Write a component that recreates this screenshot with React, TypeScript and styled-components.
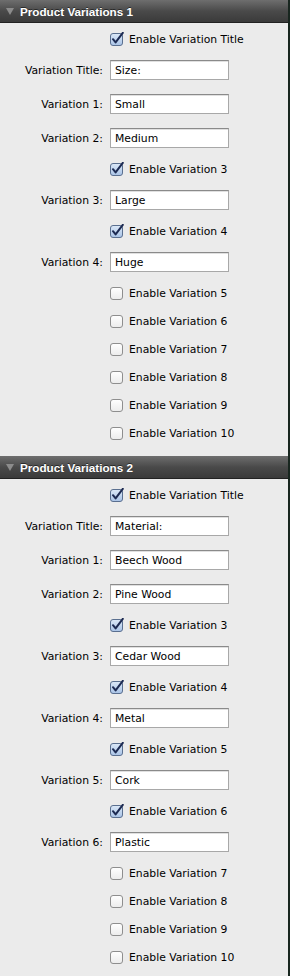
import React from "react";
import styled, { createGlobalStyle } from "styled-components";

const Global = createGlobalStyle`
  html, body { margin: 0; padding: 0; background: #ebebeb; }
  body { font-family: "DejaVu Sans", "Liberation Sans", sans-serif; }
`;

const Page = styled.div`
  width: 290px;
  box-sizing: border-box;
  border-right: 2px solid #18261f;
  background: #ebebeb;
`;

const Header = styled.div`
  height: 23px;
  box-sizing: border-box;
  display: flex;
  align-items: center;
  gap: 6px;
  padding-left: 6px;
  background: linear-gradient(#6e6e6e, #4a4a4a 50%, #3a3a3a);
  border-bottom: 1px solid #222;
  color: #fff;
  font-family: "Liberation Sans", Arial, sans-serif;
  font-weight: bold;
  font-size: 11.7px;
  text-shadow: 0 -1px 0 rgba(0,0,0,0.5);
`;

const Tri = styled.span`
  width: 0;
  height: 0;
  border-left: 4px solid transparent;
  border-right: 4px solid transparent;
  border-top: 7px solid #8c8c8c;
  margin-top: 1px;
`;

const Body = styled.div<{ $last?: boolean }>`
  padding: 2px 0 ${(p) => (p.$last ? "6px" : "9px")} 0;
  display: flex;
  flex-direction: column;
`;

const CheckRow = styled.div`
  height: 28px;
  display: flex;
  align-items: center;
  padding-left: 110px;
  gap: 5px;
  font-size: 10.8px;
  color: #000;
`;

const InputRow = styled.div`
  height: 34px;
  display: grid;
  grid-template-columns: 103px 119px;
  column-gap: 7px;
  align-items: center;
  font-size: 10.8px;
  color: #000;
`;

const Label = styled.label`
  text-align: right;
`;

const Field = styled.div`
  height: 20px;
  box-sizing: border-box;
  background: #fff;
  border: 1px solid #a8a8a8;
  border-top-color: #8a8a8a;
  box-shadow: inset 0 1px 0 #e0e0e0;
  display: flex;
  align-items: center;
  padding-left: 4px;
  font-size: 10.8px;
`;

const Box = ({ checked }: { checked: boolean }) => (
  <svg width="14" height="14" viewBox="0 0 14 14">
    <defs>
      <linearGradient id={checked ? "gc" : "gu"} x1="0" y1="0" x2="0" y2="1">
        {checked ? (
          <>
            <stop offset="0" stopColor="#dbe8f7" />
            <stop offset="1" stopColor="#a9c3e6" />
          </>
        ) : (
          <>
            <stop offset="0" stopColor="#ffffff" />
            <stop offset="1" stopColor="#ececec" />
          </>
        )}
      </linearGradient>
    </defs>
    <rect x="0.5" y="1.5" width="12" height="12" rx="2.5" fill={`url(#${checked ? "gc" : "gu"})`} stroke={checked ? "#5a6f8f" : "#8e8e8e"} />
    {checked && (
      <path d="M3 7.2 L5.6 10.4 L12.8 0.8" fill="none" stroke="#1c2a52" strokeWidth="2" strokeLinecap="round" strokeLinejoin="round" />
    )}
  </svg>
);

type Row =
  | { kind: "check"; label: string; checked: boolean }
  | { kind: "input"; label: string; value: string };

const Section = ({ title, rows, last }: { title: string; rows: Row[]; last?: boolean }) => (
  <>
    <Header>
      <Tri />
      <span>{title}</span>
    </Header>
    <Body $last={last}>
      {rows.map((r, i) =>
        r.kind === "check" ? (
          <CheckRow key={i}>
            <Box checked={r.checked} />
            <span>{r.label}</span>
          </CheckRow>
        ) : (
          <InputRow key={i}>
            <Label>{r.label}</Label>
            <Field>{r.value}</Field>
          </InputRow>
        )
      )}
    </Body>
  </>
);

const c = (label: string, checked: boolean): Row => ({ kind: "check", label, checked });
const f = (label: string, value: string): Row => ({ kind: "input", label, value });

const s1: Row[] = [
  c("Enable Variation Title", true),
  f("Variation Title:", "Size:"),
  f("Variation 1:", "Small"),
  f("Variation 2:", "Medium"),
  c("Enable Variation 3", true),
  f("Variation 3:", "Large"),
  c("Enable Variation 4", true),
  f("Variation 4:", "Huge"),
  c("Enable Variation 5", false),
  c("Enable Variation 6", false),
  c("Enable Variation 7", false),
  c("Enable Variation 8", false),
  c("Enable Variation 9", false),
  c("Enable Variation 10", false),
];

const s2: Row[] = [
  c("Enable Variation Title", true),
  f("Variation Title:", "Material:"),
  f("Variation 1:", "Beech Wood"),
  f("Variation 2:", "Pine Wood"),
  c("Enable Variation 3", true),
  f("Variation 3:", "Cedar Wood"),
  c("Enable Variation 4", true),
  f("Variation 4:", "Metal"),
  c("Enable Variation 5", true),
  f("Variation 5:", "Cork"),
  c("Enable Variation 6", true),
  f("Variation 6:", "Plastic"),
  c("Enable Variation 7", false),
  c("Enable Variation 8", false),
  c("Enable Variation 9", false),
  c("Enable Variation 10", false),
];

export default function App() {
  return (
    <>
      <Global />
      <Page>
        <Section title="Product Variations 1" rows={s1} />
        <Section title="Product Variations 2" rows={s2} last />
      </Page>
    </>
  );
}
